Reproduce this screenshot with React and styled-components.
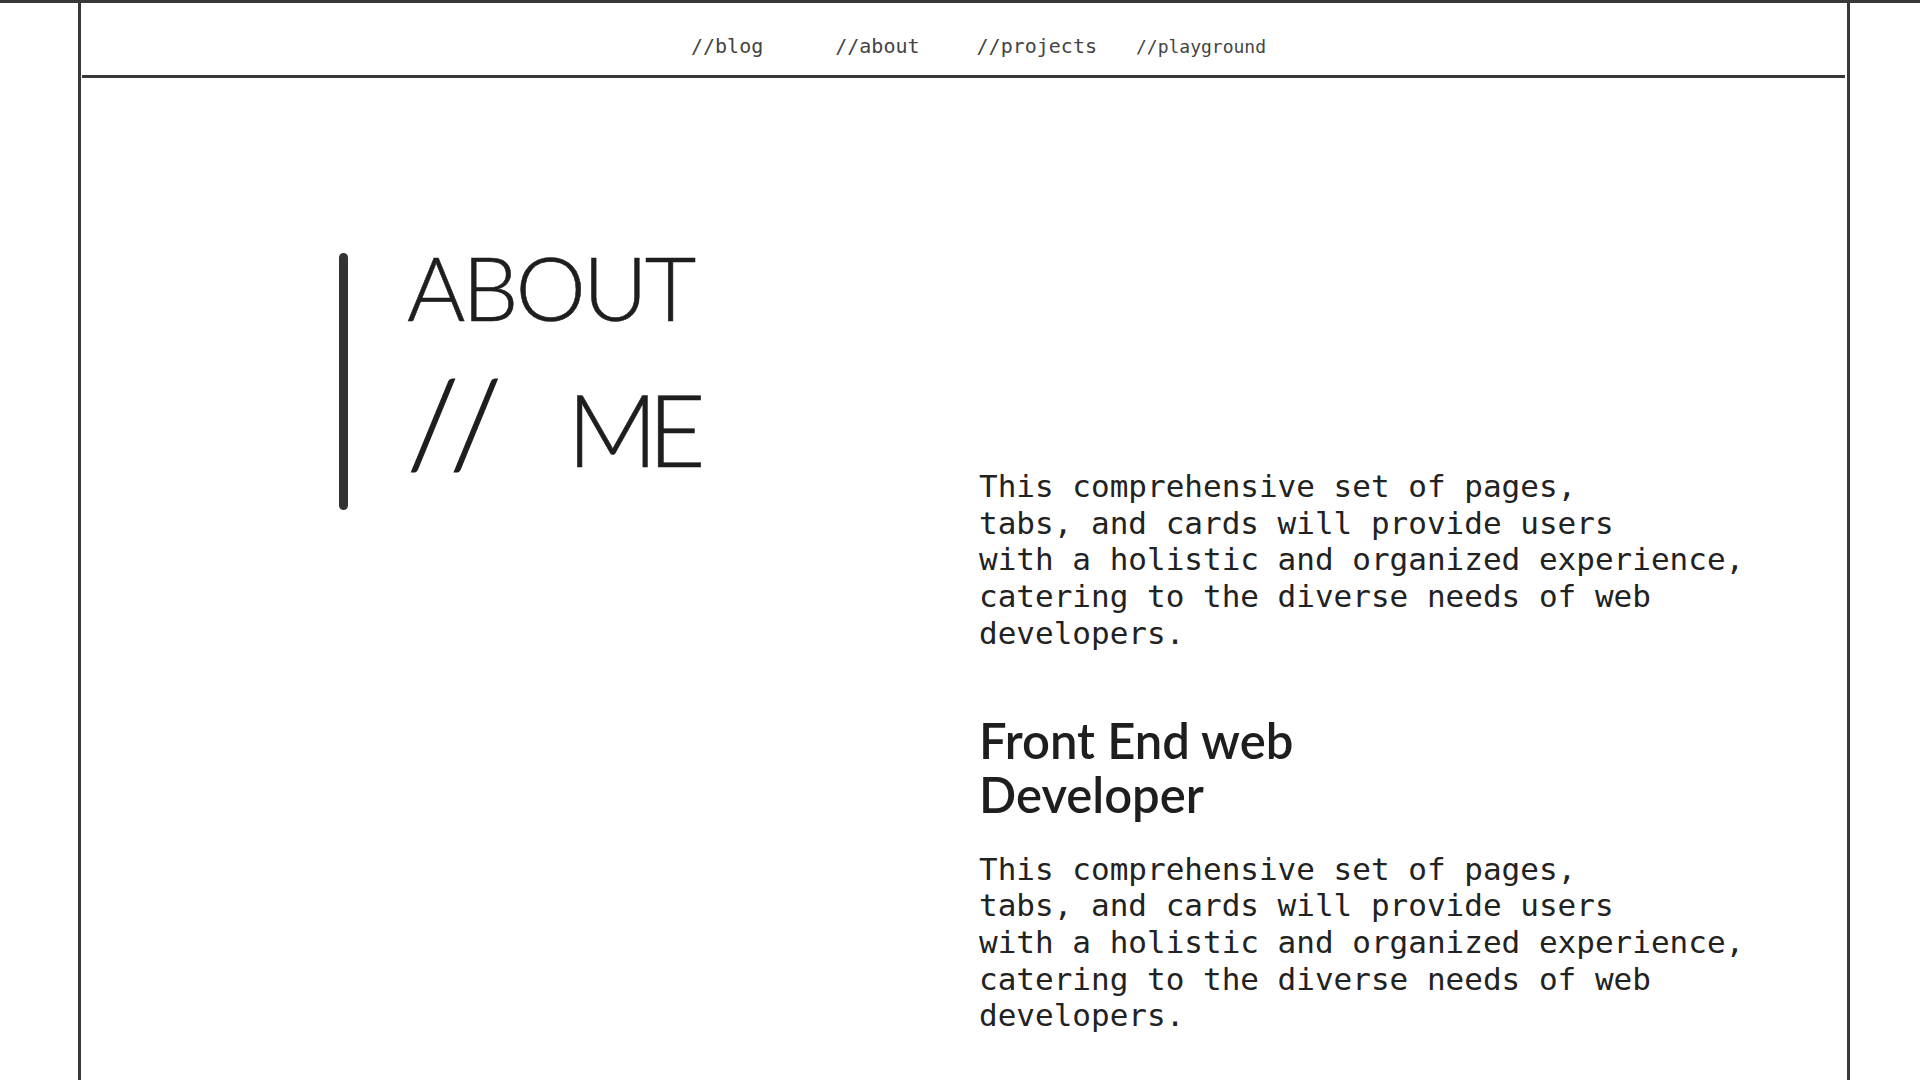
import styled, { createGlobalStyle } from "styled-components";

const GlobalStyle = createGlobalStyle`
  html,
  body {
    margin: 0;
    padding: 0;
    background: #fff;
  }

  body {
    border-top: 3px solid #383838;
    font-family: "DejaVu Sans Mono", "Liberation Mono", monospace;
    color: #222;
  }
`;

const FrameStyled = styled.div`
  margin-left: 78px;
  width: 1772px;
  min-height: calc(100vh - 3px);
  box-sizing: border-box;
  border-left: 3px solid #383838;
  border-right: 3px solid #383838;
`;

const HeaderStyled = styled.header`
  height: 75px;
  box-sizing: border-box;
  margin: 0 2px 0 1px;
  padding: 33px 0 0 609px;
  border-bottom: 3px solid #383838;
  display: flex;
  align-items: baseline;
`;

const NavLink = styled.a`
  font-size: ${(p) => (p.$small ? 18 : 20)}px;
  line-height: 20px;
  margin-left: ${(p) => p.$gap || 0}px;
  color: #444;
  text-decoration: none;
`;

const MainStyled = styled.main`
  display: grid;
  grid-template-columns: 640px 1fr;
  padding: 175px 0 0 258px;
`;

const TitleBlock = styled.div`
  display: flex;
  align-items: flex-start;
`;

const Bar = styled.span`
  flex: none;
  width: 9px;
  height: 257px;
  border-radius: 5px;
  background: #333;
`;

const Title = styled.h1`
  margin: 0 0 0 59px;
  font-family: Lato, "Noto Sans", sans-serif;
  font-weight: 300;
  color: #1e1e1e;
  -webkit-text-stroke: 0.6px #1e1e1e;
`;

const TitleLine = styled.span`
  display: block;
  font-size: ${(p) => p.$size}px;
  line-height: ${(p) => p.$lh}px;
  margin-top: ${(p) => p.$mt || 0}px;
  letter-spacing: ${(p) => p.$ls || 0}px;
  word-spacing: ${(p) => p.$ws || 0}px;
  white-space: nowrap;
`;

const Slashes = styled.span`
  font-size: 1.2em;
  line-height: 0;
  letter-spacing: 16px;
  -webkit-text-stroke: 1.2px #1e1e1e;
`;

const Column = styled.section`
  padding-top: 215px;
  padding-bottom: 40px;
`;

const Text = styled.p`
  margin: ${(p) => p.$mt || 0}px 0 0;
  font-size: 31px;
  line-height: 36.7px;
  color: #222;
`;

const Role = styled.h2`
  margin: 61px 0 0;
  font-family: Lato, "Noto Sans", sans-serif;
  font-weight: 600;
  font-size: 49px;
  line-height: 54px;
  color: #1e1e1e;
`;

const links = [
  { label: "//blog", gap: 0 },
  { label: "//about", gap: 72 },
  { label: "//projects", gap: 57 },
  { label: "//playground", gap: 39, small: true },
];

const Blurb = ({ mt }) => (
  <Text $mt={mt}>
    This comprehensive set of pages,
    <br />
    tabs, and cards will provide users
    <br />
    with a holistic and organized experience,
    <br />
    catering to the diverse needs of web developers.
  </Text>
);

export default function App() {
  return (
    <>
      <GlobalStyle />
      <FrameStyled>
        <HeaderStyled>
          {links.map((l) => (
            <NavLink key={l.label} href="#" $gap={l.gap} $small={l.small}>
              {l.label}
            </NavLink>
          ))}
        </HeaderStyled>
        <MainStyled>
          <TitleBlock>
            <Bar />
            <Title>
              <TitleLine $size={89} $lh={67} $ls={-3}>
                ABOUT
              </TitleLine>
              <TitleLine $size={100} $lh={100} $mt={58} $ls={-10} $ws={32}>
                <Slashes>//</Slashes> ME
              </TitleLine>
            </Title>
          </TitleBlock>
          <Column>
            <Blurb />
            <Role>
              Front End web
              <br />
              Developer
            </Role>
            <Blurb mt={30} />
          </Column>
        </MainStyled>
      </FrameStyled>
    </>
  );
}
